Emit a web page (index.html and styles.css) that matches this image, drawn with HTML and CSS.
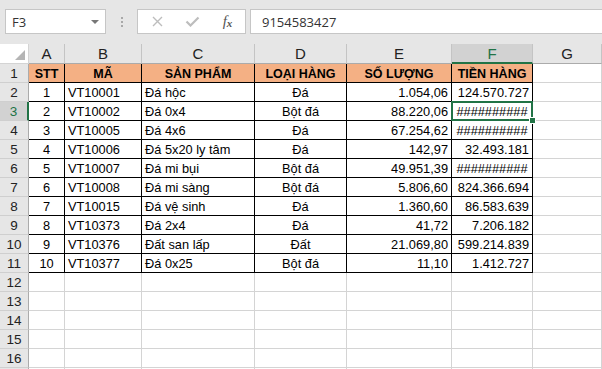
FILE: index.html
```html
<!DOCTYPE html>
<html lang="vi">
<head>
    <meta charset="UTF-8">
    <meta name="viewport" content="width=device-width, initial-scale=1.0">
    <title>Bảng hàng</title>
    <link rel="stylesheet" href="styles.css">
</head>
<body>

    <div class="topbar">
        <div class="name-box">
            <span>F3</span>
            <i class="arrow"></i>
        </div>
        <div class="dots"><span></span><span></span><span></span></div>
        <div class="buttons">
            <span class="btn">
                <svg width="11" height="11" viewBox="0 0 11 11"><path d="M1 1L10 10M10 1L1 10" stroke="#bdbdbd" stroke-width="1.4" fill="none"/></svg>
            </span>
            <span class="btn">
                <svg width="15" height="11" viewBox="0 0 15 11"><path d="M1.5 5.5L5.5 9.5L13.5 1.5" stroke="#bdbdbd" stroke-width="2.2" fill="none"/></svg>
            </span>
            <span class="btn fx">f<small>x</small></span>
        </div>
        <div class="formula">9154583427</div>
    </div>

    <div class="sheet">
        <div class="row head-row">
            <div class="cell corner"><span></span></div>
            <div class="cell ch">A</div>
            <div class="cell ch">B</div>
            <div class="cell ch">C</div>
            <div class="cell ch">D</div>
            <div class="cell ch">E</div>
            <div class="cell ch active">F</div>
            <div class="cell ch">G</div>
        </div>

        <div class="row title">
            <div class="cell rh">1</div>
            <div class="cell t">STT</div>
            <div class="cell t">MÃ</div>
            <div class="cell t">SẢN PHẨM</div>
            <div class="cell t">LOẠI HÀNG</div>
            <div class="cell t">SỐ LƯỢNG</div>
            <div class="cell t">TIỀN HÀNG</div>
            <div class="cell"></div>
        </div>
        <div class="row">
            <div class="cell rh">2</div>
            <div class="cell t ctr">1</div>
            <div class="cell t">VT10001</div>
            <div class="cell t">Đá hộc</div>
            <div class="cell t ctr">Đá</div>
            <div class="cell t num">1.054,06</div>
            <div class="cell t num">124.570.727</div>
            <div class="cell"></div>
        </div>
        <div class="row">
            <div class="cell rh active">3</div>
            <div class="cell t ctr">2</div>
            <div class="cell t">VT10002</div>
            <div class="cell t">Đá 0x4</div>
            <div class="cell t ctr">Bột đá</div>
            <div class="cell t num">88.220,06</div>
            <div class="cell t ctr sel">##########<span class="handle"></span></div>
            <div class="cell"></div>
        </div>
        <div class="row">
            <div class="cell rh">4</div>
            <div class="cell t ctr">3</div>
            <div class="cell t">VT10005</div>
            <div class="cell t">Đá 4x6</div>
            <div class="cell t ctr">Đá</div>
            <div class="cell t num">67.254,62</div>
            <div class="cell t ctr">##########</div>
            <div class="cell"></div>
        </div>
        <div class="row">
            <div class="cell rh">5</div>
            <div class="cell t ctr">4</div>
            <div class="cell t">VT10006</div>
            <div class="cell t">Đá 5x20 ly tâm</div>
            <div class="cell t ctr">Đá</div>
            <div class="cell t num">142,97</div>
            <div class="cell t num">32.493.181</div>
            <div class="cell"></div>
        </div>
        <div class="row">
            <div class="cell rh">6</div>
            <div class="cell t ctr">5</div>
            <div class="cell t">VT10007</div>
            <div class="cell t">Đá mi bụi</div>
            <div class="cell t ctr">Bột đá</div>
            <div class="cell t num">49.951,39</div>
            <div class="cell t ctr">##########</div>
            <div class="cell"></div>
        </div>
        <div class="row">
            <div class="cell rh">7</div>
            <div class="cell t ctr">6</div>
            <div class="cell t">VT10008</div>
            <div class="cell t">Đá mi sàng</div>
            <div class="cell t ctr">Bột đá</div>
            <div class="cell t num">5.806,60</div>
            <div class="cell t num">824.366.694</div>
            <div class="cell"></div>
        </div>
        <div class="row">
            <div class="cell rh">8</div>
            <div class="cell t ctr">7</div>
            <div class="cell t">VT10015</div>
            <div class="cell t">Đá vệ sinh</div>
            <div class="cell t ctr">Đá</div>
            <div class="cell t num">1.360,60</div>
            <div class="cell t num">86.583.639</div>
            <div class="cell"></div>
        </div>
        <div class="row">
            <div class="cell rh">9</div>
            <div class="cell t ctr">8</div>
            <div class="cell t">VT10373</div>
            <div class="cell t">Đá 2x4</div>
            <div class="cell t ctr">Đá</div>
            <div class="cell t num">41,72</div>
            <div class="cell t num">7.206.182</div>
            <div class="cell"></div>
        </div>
        <div class="row">
            <div class="cell rh">10</div>
            <div class="cell t ctr">9</div>
            <div class="cell t">VT10376</div>
            <div class="cell t">Đất san lấp</div>
            <div class="cell t ctr">Đất</div>
            <div class="cell t num">21.069,80</div>
            <div class="cell t num">599.214.839</div>
            <div class="cell"></div>
        </div>
        <div class="row">
            <div class="cell rh">11</div>
            <div class="cell t ctr">10</div>
            <div class="cell t">VT10377</div>
            <div class="cell t">Đá 0x25</div>
            <div class="cell t ctr">Bột đá</div>
            <div class="cell t num">11,10</div>
            <div class="cell t num">1.412.727</div>
            <div class="cell"></div>
        </div>

        <div class="row"><div class="cell rh">12</div><div class="cell"></div><div class="cell"></div><div class="cell"></div><div class="cell"></div><div class="cell"></div><div class="cell"></div><div class="cell"></div></div>
        <div class="row"><div class="cell rh">13</div><div class="cell"></div><div class="cell"></div><div class="cell"></div><div class="cell"></div><div class="cell"></div><div class="cell"></div><div class="cell"></div></div>
        <div class="row"><div class="cell rh">14</div><div class="cell"></div><div class="cell"></div><div class="cell"></div><div class="cell"></div><div class="cell"></div><div class="cell"></div><div class="cell"></div></div>
        <div class="row"><div class="cell rh">15</div><div class="cell"></div><div class="cell"></div><div class="cell"></div><div class="cell"></div><div class="cell"></div><div class="cell"></div><div class="cell"></div></div>
        <div class="row"><div class="cell rh">16</div><div class="cell"></div><div class="cell"></div><div class="cell"></div><div class="cell"></div><div class="cell"></div><div class="cell"></div><div class="cell"></div></div>
        <div class="row"><div class="cell rh"></div><div class="cell"></div><div class="cell"></div><div class="cell"></div><div class="cell"></div><div class="cell"></div><div class="cell"></div><div class="cell"></div></div>
    </div>

</body>
</html>
```

FILE: styles.css
```css
* {
    margin: 0;
    padding: 0;
    box-sizing: border-box;
}

body {
    width: 602px;
    height: 369px;
    overflow: hidden;
    background: #fff;
    font-family: 'Liberation Sans', Arial, sans-serif;
}

/* formula bar */
.topbar {
    height: 44px;
    background: #e6e6e6;
    display: flex;
    align-items: flex-start;
    padding: 9px 0 0 5px;
}

.name-box {
    width: 101px;
    height: 25px;
    background: #fff;
    border: 1px solid #c6c6c6;
    display: flex;
    align-items: center;
    justify-content: space-between;
    padding: 0 6px;
    font-family: 'Open Sans', sans-serif;
    font-size: 13px;
    color: #333;
}

.arrow {
    width: 0;
    height: 0;
    border-left: 4px solid transparent;
    border-right: 4px solid transparent;
    border-top: 4px solid #777;
}

.dots {
    width: 31px;
    height: 25px;
    display: flex;
    flex-direction: column;
    align-items: center;
    gap: 2px;
    padding-top: 8px;
}

.dots span {
    width: 2px;
    height: 2px;
    background: #a8a8a8;
}

.buttons {
    width: 109px;
    height: 25px;
    background: #fff;
    border: 1px solid #c6c6c6;
    display: flex;
    align-items: center;
    padding-left: 2px;
}

.btn {
    width: 35px;
    display: flex;
    justify-content: center;
    align-items: center;
}

.fx {
    font-family: 'Liberation Serif', serif;
    font-style: italic;
    font-size: 15px;
    color: #555;
}

.fx small {
    font-size: 11px;
    font-weight: bold;
    margin-top: 3px;
}

.formula {
    flex: 1;
    height: 25px;
    margin-left: 4px;
    background: #fff;
    border: 1px solid #c6c6c6;
    border-right: none;
    padding-left: 11px;
    display: flex;
    align-items: center;
    font-family: 'Open Sans', sans-serif;
    font-size: 13px;
    color: #333;
}

/* grid */
.row {
    display: grid;
    grid-template-columns: 29px 36px 77px 113px 92px 105px 81px 1fr;
    height: 19px;
}

.head-row {
    height: 20px;
}

.cell {
    border-right: 1px solid #d4d4d4;
    border-bottom: 1px solid #d4d4d4;
    padding: 2px 3px 0;
    font-size: 12.8px;
    line-height: 16px;
    color: #000;
    white-space: nowrap;
    overflow: hidden;
}

.cell.t {
    border-color: #000;
}

.title .t {
    background: #f4b084;
    font-weight: bold;
    font-size: 12.5px;
    text-align: center;
}

.ctr {
    text-align: center;
}

.num {
    text-align: right;
}

.rh {
    background: #e6e6e6;
    border-right-color: #ababab;
    border-bottom-color: #cfcfcf;
    padding: 2px 0 0;
    text-align: center;
    font-size: 13.5px;
    color: #222;
}

.rh.active {
    background: #d2d2d2;
    color: #217346;
    border-right: 2px solid #217346;
}

.ch {
    background: #e6e6e6;
    border-right-color: #c4c4c4;
    border-bottom-color: #ababab;
    padding: 0;
    text-align: center;
    font-size: 15px;
    line-height: 19px;
    color: #222;
}

.ch.active {
    background: #d2d2d2;
    color: #217346;
    border-bottom: 2px solid #217346;
}

.corner {
    display: flex;
    justify-content: flex-end;
    align-items: flex-end;
    padding: 0 3px 3px 0;
}

.corner span {
    width: 0;
    height: 0;
    border-left: 10px solid transparent;
    border-bottom: 10px solid #b5b5b5;
}

/* active cell */
.sel {
    position: relative;
    overflow: visible;
}

.sel::after {
    content: "";
    position: absolute;
    top: -1px;
    left: -1px;
    right: -1px;
    bottom: -1px;
    border: 2px solid #217346;
    z-index: 1;
}

.handle {
    position: absolute;
    right: -4px;
    bottom: -4px;
    width: 7px;
    height: 7px;
    background: #217346;
    border: 1px solid #fff;
    z-index: 2;
}
```
